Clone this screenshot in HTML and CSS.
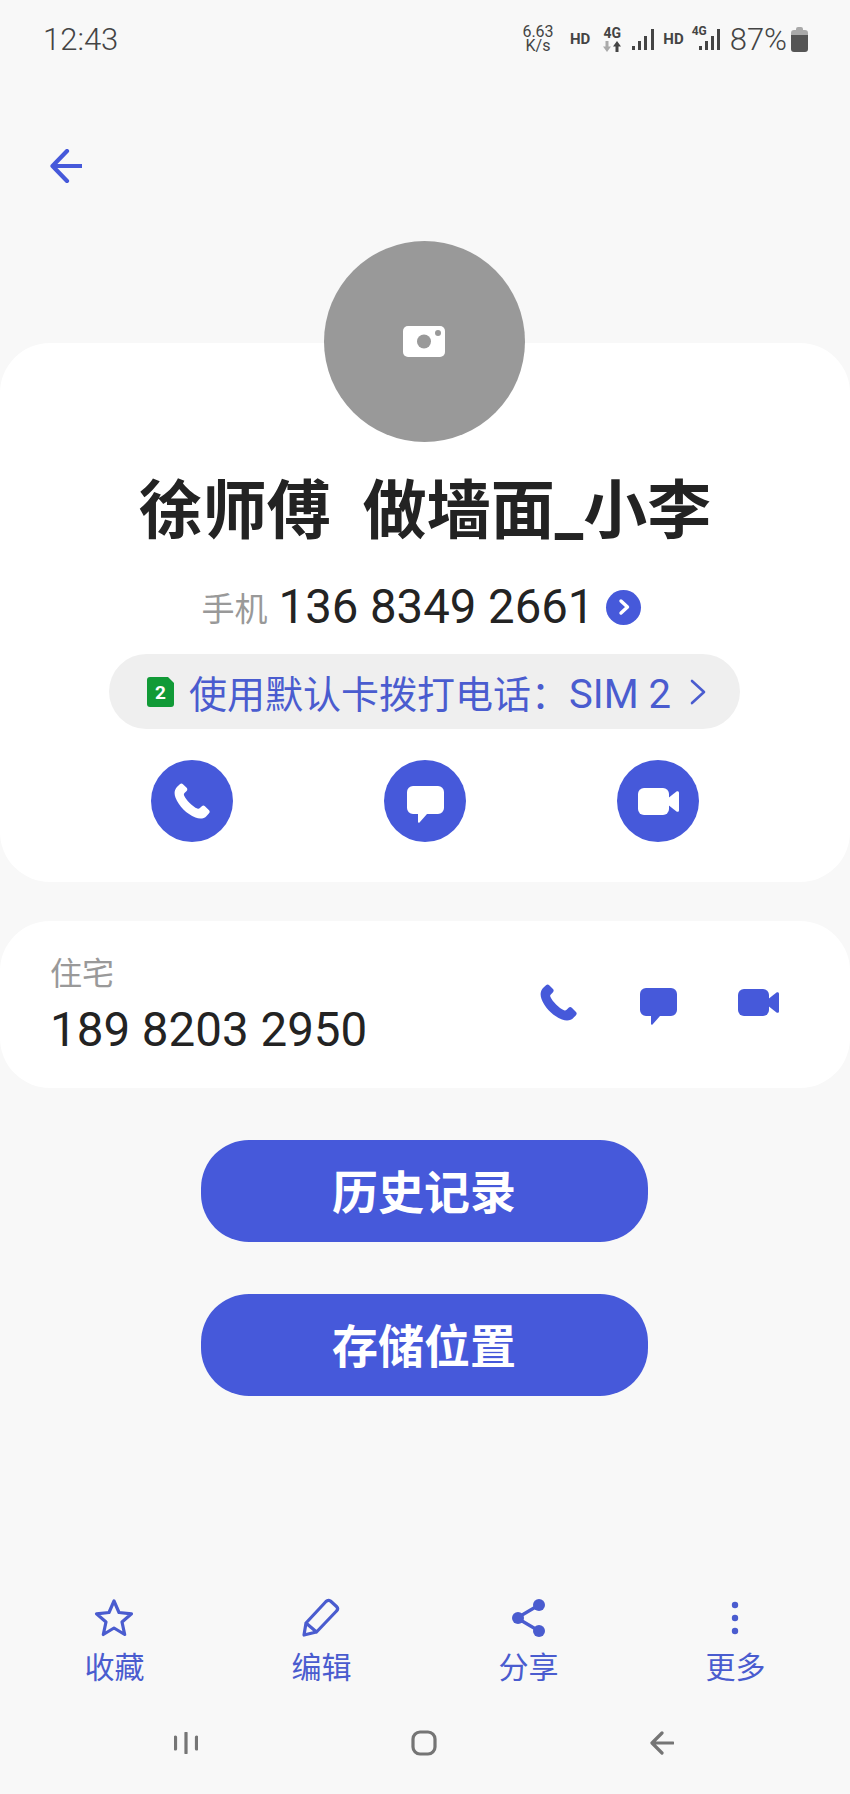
FILE: index.html
```html
<!DOCTYPE html>
<html lang="zh-CN">
<head>
<meta charset="UTF-8">
<meta name="viewport" content="width=device-width, initial-scale=1.0">
<title>联系人详情</title>
<link rel="stylesheet" href="styles.css">
</head>
<body>
<svg class="defs" width="0" height="0" aria-hidden="true">
  <symbol id="i-phone" viewBox="0 0 37 37">
    <path d="M6 1.2C7 .4 8.3 .4 9.2 1.2L13 5C13.9 6 13.9 7.2 13 8.2L10.8 10.4C10 11.2 10 12 10.5 13C12.5 17.5 19 24 24 26.3C25 26.8 25.8 26.6 26.6 25.8L28.6 23.8C29.600 22.8 30.8 22.8 31.8 23.8L36 28C36.9 29 36.9 30.2 36 31.2L33.5 33.8C31 36.5 27 37.5 22 35.5C13 32 5 24 1.5 15C0 11 .3 7 3 4Z"/>
  </symbol>
  <symbol id="i-bubble" viewBox="0 0 37 37">
    <path d="M6 0H31A6 6 0 0 1 37 6V22A6 6 0 0 1 31 28H20L12.500 36.500C12 37 11 36.800 11 36V28H6A6 6 0 0 1 0 22V6A6 6 0 0 1 6 0Z"/>
  </symbol>
  <symbol id="i-video" viewBox="0 0 41 27">
    <rect x="0" y="0" width="31" height="27" rx="6"/>
    <path d="M29 11L38.500 3.600C39.600 2.800 41 3.400 41 4.800V22.200C41 23.600 39.600 24.200 38.500 23.400L29 16Z"/>
  </symbol>
</svg>

<header class="status">
  <span class="clock">12:43</span>
  <div class="status-right">
    <div class="speed"><span>6.63</span><span>K/s</span></div>
    <span class="hd">HD</span>
    <span class="net">
      <b>4G</b>
      <svg width="18" height="11" viewBox="0 0 18 11">
        <path class="arrow-off" d="M2.500 0H5.500V5.500H8L4 11L0 5.500H2.500Z"/>
        <path class="arrow-on" d="M14 0L18 5.500H15.500V11H12.500V5.500H10Z"/>
      </svg>
    </span>
    <svg class="bars" width="22" height="21" viewBox="0 0 22 21">
      <rect x="0" y="17" width="3" height="4"/><rect x="6" y="12" width="3" height="9"/><rect x="12" y="7" width="3" height="14"/><rect x="19" y="0" width="3" height="21"/>
    </svg>
    <span class="hd hd-two">HD</span>
    <span class="sim-signal">
      <b>4G</b>
      <svg class="bars" width="21" height="21" viewBox="0 0 21 21">
        <rect x="0" y="17" width="3" height="4"/><rect x="6" y="12" width="3" height="9"/><rect x="12" y="7" width="3" height="14"/><rect x="18" y="0" width="3" height="21"/>
      </svg>
    </span>
    <span class="percent">87%</span>
    <svg width="17" height="25" viewBox="0 0 17 25">
      <path fill="#a9a9a9" d="M5 2A2 2 0 0 1 7 0H10A2 2 0 0 1 12 2V3H14A3 3 0 0 1 17 6V8H0V6A3 3 0 0 1 3 3H5Z"/>
      <path fill="#555" d="M0 8H17V22A3 3 0 0 1 14 25H3A3 3 0 0 1 0 22Z"/>
    </svg>
  </div>
</header>

<div class="topbar">
  <svg width="32" height="34" viewBox="0 0 32 34" class="back">
    <path d="M17 2L2.500 17L17 32M3 17H31"/>
  </svg>
</div>

<div class="avatar">
  <svg width="42" height="32" viewBox="0 0 42 32">
    <rect width="42" height="31" rx="5" fill="#fff"/>
    <circle cx="21" cy="15.500" r="7" fill="#999"/>
    <circle cx="35" cy="7" r="3" fill="#999"/>
  </svg>
</div>

<section class="card card-main">
  <h1 class="name">徐师傅&nbsp;&nbsp;做墙面_小李</h1>
  <div class="phone-row">
    <span class="phone-label">手机</span>
    <span class="phone-number">136 8349 2661</span>
    <span class="more-dot">
      <svg width="14" height="18" viewBox="0 0 14 18"><path d="M4 3L10.500 9L4 15"/></svg>
    </span>
  </div>
  <div class="sim-pill">
    <svg width="27" height="30" viewBox="0 0 27 30">
      <path fill="#119a37" d="M3 0H21L27 6V27A3 3 0 0 1 24 30H3A3 3 0 0 1 0 27V3A3 3 0 0 1 3 0Z"/>
      <text x="13.500" y="22" text-anchor="middle" class="sim-num">2</text>
    </svg>
    <span class="sim-text">使用默认卡拨打电话：<span class="sim-name">SIM 2</span></span>
    <svg class="sim-chevron" width="16" height="26" viewBox="0 0 16 26"><path d="M2 2L14 13L2 24"/></svg>
  </div>
  <div class="actions">
    <span class="round-btn"><svg width="36" height="36"><use href="#i-phone"/></svg></span>
    <span class="round-btn"><svg class="bubble" width="37" height="37"><use href="#i-bubble"/></svg></span>
    <span class="round-btn"><svg width="41" height="27"><use href="#i-video"/></svg></span>
  </div>
</section>

<section class="card card-home">
  <div class="home-text">
    <span class="home-label">住宅</span>
    <span class="home-number">189 8203 2950</span>
  </div>
  <div class="home-icons">
    <svg width="37" height="37"><use href="#i-phone"/></svg>
    <svg class="bubble" width="37" height="37"><use href="#i-bubble"/></svg>
    <svg width="41" height="27"><use href="#i-video"/></svg>
  </div>
</section>

<button class="big-btn">历史记录</button>
<button class="big-btn">存储位置</button>

<nav class="toolbar">
  <div class="tool">
    <svg width="40" height="40" viewBox="0 0 40 40"><path d="M20 3L25 14.500L37.500 15.800L28 24L30.700 36.500L20 30L9.300 36.500L12 24L2.500 15.800L15 14.500Z"/></svg>
    <span>收藏</span>
  </div>
  <div class="tool">
    <svg width="40" height="40" viewBox="0 0 40 40"><path d="M3 37L5 25L25 3.500C26.500 2 28 2 29.500 3L35.500 8.500C37 10 37 11.500 35.500 13L15.500 34ZM5 25L15.500 34"/></svg>
    <span>编辑</span>
  </div>
  <div class="tool">
    <svg width="40" height="40" viewBox="0 0 40 40" class="share">
      <path d="M31 7L9 20L31 33"/>
      <circle cx="31" cy="7" r="6"/><circle cx="10" cy="20" r="6"/><circle cx="31" cy="33" r="6"/>
    </svg>
    <span>分享</span>
  </div>
  <div class="tool">
    <svg width="40" height="40" viewBox="0 0 40 40" class="dots">
      <circle cx="20" cy="7" r="3.200"/><circle cx="20" cy="20" r="3.200"/><circle cx="20" cy="33" r="3.200"/>
    </svg>
    <span>更多</span>
  </div>
</nav>

<nav class="sysnav">
  <svg width="24" height="22" viewBox="0 0 24 22"><path d="M1.500 5V17M12 1V21M22.500 5V17"/></svg>
  <svg width="26" height="26" viewBox="0 0 26 26"><rect x="2" y="2" width="22" height="22" rx="7"/></svg>
  <svg width="24" height="24" viewBox="0 0 24 24"><path d="M12 2L2 12L12 22M2.500 12H23"/></svg>
</nav>
</body>
</html>
```

FILE: styles.css
```css
:root{--blue:#4659da;--blue-text:#4a5ccf;--bg:#f8f8f8;--text:#232323;--grey:#999}
*{box-sizing:border-box;margin:0;padding:0}
html,body{height:1794px}
body{display:flex;flex-direction:column;align-items:center;overflow:hidden;background:var(--bg);color:var(--text);font-family:Roboto,"Noto Sans CJK SC",sans-serif;padding-bottom:21px}
.defs{position:absolute}

.status{width:100%;height:78px;padding:0 42px 0 43px;display:flex;justify-content:space-between;align-items:center;color:#444}
.clock{font-size:31px;font-weight:300}
.status-right{display:flex;align-items:center}
.speed{font-size:16px;width:32px;margin-right:2px;text-align:center}
.speed span{display:block;height:14px;line-height:14px}
.hd{font-size:15px;font-weight:700;margin-left:14px}
.hd-two{margin-left:9px}
.net{display:flex;flex-direction:column;align-items:center;margin-left:13px;width:18px}
.net b{font-size:14px;line-height:14px}
.net svg{margin-top:1px}
.arrow-off{fill:#aaa}
.arrow-on{fill:#444}
.bars{fill:#444;display:block}
.net + .bars{margin-left:11px}
.sim-signal{display:block;position:relative;width:28px;height:21px;margin-left:8px;padding-left:7px}
.sim-signal b{position:absolute;left:0;top:-4px;font-size:12px;line-height:13px}
.percent{font-size:31px;font-weight:300;margin-left:10px;margin-right:4px}

.topbar{width:100%;height:56px;padding-left:50px;margin-top:60px;display:flex;align-items:center}
.back{fill:none;stroke:var(--blue);stroke-width:4.2;stroke-linecap:round;stroke-linejoin:round}

.avatar{position:relative;z-index:1;width:201px;height:201px;margin:47px 2px -99px 0;border-radius:50%;background:var(--grey);display:flex;align-items:center;justify-content:center}

.card{width:100%;background:#fff;border-radius:50px}
.card-main{height:539px;padding-top:129px;display:flex;flex-direction:column;align-items:center}
.name{font-size:64px;font-weight:700;line-height:80px;white-space:nowrap}
.phone-row{height:60px;margin:25px 7px 0 0;display:flex;align-items:center}
.phone-label{font-size:33px;color:var(--grey);margin-right:11px}
.phone-number{font-size:47.3px}
.more-dot{width:35px;height:35px;margin-left:12px;border-radius:50%;background:var(--blue);display:flex;align-items:center;justify-content:center}
.more-dot svg{fill:none;stroke:#fff;stroke-width:3.4;stroke-linecap:round;stroke-linejoin:round}
.sim-pill{width:631px;height:75px;margin:17px 1px 0 0;padding-left:38px;border-radius:38px;background:#efefef;display:flex;align-items:center;color:var(--blue-text)}
.sim-num{font-size:19px;font-weight:700;fill:#fff}
.sim-text{font-size:38px;margin-left:15px;white-space:nowrap}
.sim-name{font-size:40px}
.sim-chevron{margin-left:19px;fill:none;stroke:var(--blue-text);stroke-width:2.6;stroke-linecap:round;stroke-linejoin:round}
.actions{margin-top:31px;display:grid;grid-template-columns:repeat(3,233px);justify-items:center}
.round-btn{width:82px;height:82px;border-radius:50%;background:var(--blue);fill:#fff;display:flex;align-items:center;justify-content:center}
.round-btn .bubble{margin-top:6px}

.card-home{height:167px;margin-top:39px;padding:31px 42px 0 50px;display:flex;justify-content:space-between;align-items:flex-start}
.home-text{display:flex;flex-direction:column}
.home-label{font-size:32px;line-height:44px;color:var(--grey)}
.home-number{font-size:47.5px;line-height:60px;margin-top:4px}
.home-icons{display:grid;grid-template-columns:repeat(3,100px);justify-items:center;align-items:center;height:48px;margin-top:26px;fill:var(--blue)}
.home-icons .bubble{margin-top:9px}

.big-btn{width:447px;height:102px;margin:52px 2px 0 0;padding-bottom:4px;border:none;border-radius:48px;background:var(--blue);color:#fff;font-family:inherit;font-size:46px;font-weight:700}

.toolbar{margin-top:auto;width:100%;padding-left:10px;display:grid;grid-template-columns:repeat(4,207px)}
.tool{display:flex;flex-direction:column;align-items:center;color:var(--blue-text);font-size:30px;line-height:40px;gap:10px}
.tool span{margin-left:2px}
.tool svg{fill:none;stroke:var(--blue-text);stroke-width:3.2;stroke-linejoin:round;stroke-linecap:round}
.tool .share circle,.tool .dots circle{fill:var(--blue-text);stroke:none}
.sysnav{width:100%;height:60px;margin-top:25px;padding-left:67px;display:grid;grid-template-columns:repeat(3,238px);justify-items:center;align-items:center}
.sysnav svg{fill:none;stroke:#757575;stroke-width:3.2;stroke-linecap:round;stroke-linejoin:round}
```
